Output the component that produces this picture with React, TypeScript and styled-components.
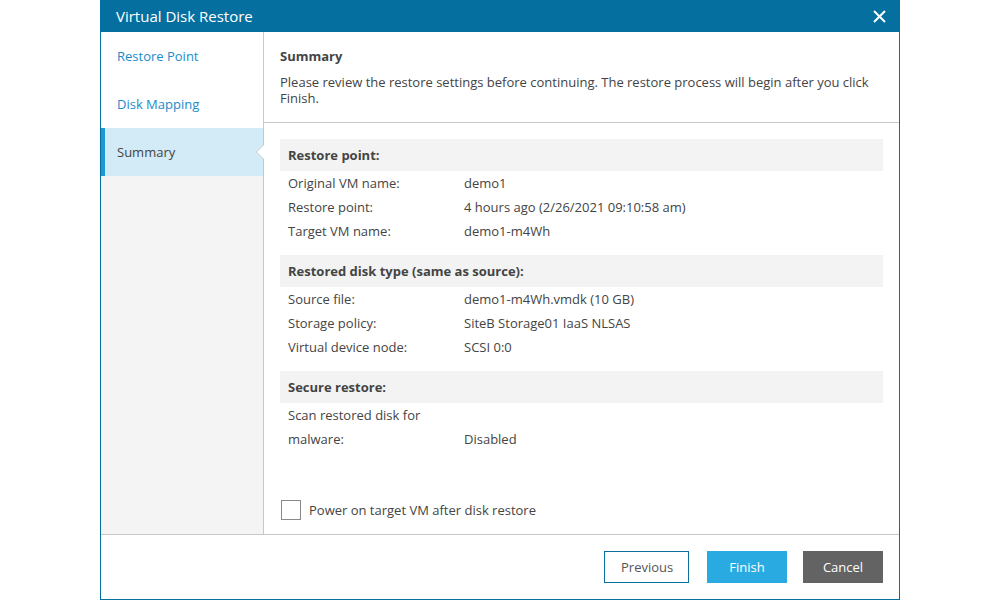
import styled, { createGlobalStyle } from "styled-components";

const GlobalStyle = createGlobalStyle`
  html, body {
    margin: 0;
    padding: 0;
    background: #ffffff;
  }
  body {
    font-family: "Open Sans", "Liberation Sans", sans-serif;
    font-size: 13px;
    color: #444444;
  }
  * {
    box-sizing: border-box;
  }
`;

const Page = styled.div`
  width: 1000px;
  height: 600px;
  display: flex;
  justify-content: center;
`;

const Dialog = styled.div`
  width: 800px;
  height: 600px;
  border: 1px solid #05709f;
  border-top: none;
  display: flex;
  flex-direction: column;
  background: #fff;
`;

const Header = styled.div`
  height: 32px;
  margin: 0 -1px;
  background: #05709f;
  display: flex;
  align-items: center;
  justify-content: space-between;
  padding: 0 14px 0 16px;
`;

const Title = styled.h1`
  margin: 0;
  font-size: 15px;
  font-weight: 400;
  color: #fff;
`;

const CloseButton = styled.button`
  border: none;
  background: transparent;
  padding: 0;
  display: flex;
  cursor: pointer;
`;

const Body = styled.div`
  flex: 1;
  display: flex;
  min-height: 0;
`;

const Sidebar = styled.nav`
  width: 163px;
  background: #f4f4f4;
  border-right: 1px solid #c8c8c8;
  display: flex;
  flex-direction: column;
`;

const StepItem = styled.div<{ $active?: boolean }>`
  position: relative;
  height: 48px;
  display: flex;
  align-items: center;
  padding-left: ${(p) => (p.$active ? "12px" : "16px")};
  border-left: ${(p) => (p.$active ? "4px solid #1d9ad6" : "none")};
  background: ${(p) => (p.$active ? "#d3eaf7" : "#fff")};
  color: ${(p) => (p.$active ? "#444" : "#1a8ccb")};
  cursor: pointer;

  ${(p) =>
    p.$active &&
    `
    &::before, &::after {
      content: "";
      position: absolute;
      top: 50%;
      width: 0;
      height: 0;
      border-style: solid;
      border-color: transparent;
    }
    &::before {
      right: -1px;
      margin-top: -8px;
      border-width: 8px 8px 8px 0;
      border-right-color: #c8c8c8;
    }
    &::after {
      right: -1px;
      margin-top: -7px;
      border-width: 7px 7px 7px 0;
      border-right-color: #fff;
    }
  `}
`;

const Main = styled.section`
  flex: 1;
  display: flex;
  flex-direction: column;
  min-width: 0;
`;

const MainHeader = styled.div`
  padding: 16px 16px 16px 16px;
  border-bottom: 1px solid #c8c8c8;
`;

const MainTitle = styled.div`
  font-weight: 700;
  line-height: 16px;
  margin-bottom: 10px;
`;

const Description = styled.p`
  margin: 0;
  line-height: 16px;
`;

const Content = styled.div`
  flex: 1;
  padding: 16px 16px 14px 16px;
  display: flex;
  flex-direction: column;
`;

const Group = styled.div`
  margin-bottom: 12px;
`;

const GroupHeader = styled.div`
  height: 32px;
  background: #f3f3f3;
  display: flex;
  align-items: center;
  padding-left: 8px;
  font-weight: 700;
`;

const Row = styled.div`
  display: grid;
  grid-template-columns: 176px 1fr;
  align-items: end;
  padding-left: 8px;
  line-height: 24px;
`;

const Label = styled.div`
  padding-right: 24px;
`;

const Value = styled.div``;

const CheckRow = styled.label`
  margin-top: auto;
  display: flex;
  align-items: center;
  gap: 8px;
  cursor: pointer;
`;

const CheckBox = styled.span`
  width: 20px;
  height: 20px;
  border: 1px solid #8a8a8a;
  background: #fff;
  margin-left: 1px;
`;

const Footer = styled.div`
  height: 65px;
  border-top: 1px solid #c8c8c8;
  display: flex;
  justify-content: flex-end;
  align-items: flex-start;
  padding: 16px 16px 0 0;
  gap: 16px;
`;

const Button = styled.button<{ $variant: "outline" | "primary" | "dark" }>`
  height: 32px;
  min-width: 80px;
  padding: 0 16px;
  font-family: "Open Sans", "Liberation Sans", sans-serif;
  font-size: 13px;
  cursor: pointer;
  border: ${(p) => (p.$variant === "outline" ? "1px solid #0b6e9e" : "none")};
  background: ${(p) =>
    p.$variant === "primary" ? "#29abe2" : p.$variant === "dark" ? "#636363" : "#fff"};
  color: ${(p) => (p.$variant === "outline" ? "#555" : "#fff")};
  margin-right: ${(p) => (p.$variant === "outline" ? "2px" : "0")};
  width: ${(p) => (p.$variant === "outline" ? "85px" : "80px")};
`;

type Item = { label: string; value: string };

const groups: { title: string; rows: Item[] }[] = [
  {
    title: "Restore point:",
    rows: [
      { label: "Original VM name:", value: "demo1" },
      { label: "Restore point:", value: "4 hours ago (2/26/2021 09:10:58 am)" },
      { label: "Target VM name:", value: "demo1-m4Wh" },
    ],
  },
  {
    title: "Restored disk type (same as source):",
    rows: [
      { label: "Source file:", value: "demo1-m4Wh.vmdk (10 GB)" },
      { label: "Storage policy:", value: "SiteB Storage01 IaaS NLSAS" },
      { label: "Virtual device node:", value: "SCSI 0:0" },
    ],
  },
  {
    title: "Secure restore:",
    rows: [{ label: "Scan restored disk for malware:", value: "Disabled" }],
  },
];

const steps = ["Restore Point", "Disk Mapping", "Summary"];

export default function App() {
  return (
    <>
      <GlobalStyle />
      <Page>
        <Dialog>
          <Header>
            <Title>Virtual Disk Restore</Title>
            <CloseButton aria-label="Close">
              <svg width="13" height="13" viewBox="0 0 13 13">
                <path d="M1 1 L12 12 M12 1 L1 12" stroke="#fff" strokeWidth="2" />
              </svg>
            </CloseButton>
          </Header>
          <Body>
            <Sidebar>
              {steps.map((s) => (
                <StepItem key={s} $active={s === "Summary"}>
                  {s}
                </StepItem>
              ))}
            </Sidebar>
            <Main>
              <MainHeader>
                <MainTitle>Summary</MainTitle>
                <Description>
                  Please review the restore settings before continuing. The restore process will
                  begin after you click Finish.
                </Description>
              </MainHeader>
              <Content>
                {groups.map((g) => (
                  <Group key={g.title}>
                    <GroupHeader>{g.title}</GroupHeader>
                    {g.rows.map((r) => (
                      <Row key={r.label}>
                        <Label>{r.label}</Label>
                        <Value>{r.value}</Value>
                      </Row>
                    ))}
                  </Group>
                ))}
                <CheckRow>
                  <CheckBox />
                  Power on target VM after disk restore
                </CheckRow>
              </Content>
            </Main>
          </Body>
          <Footer>
            <Button $variant="outline">Previous</Button>
            <Button $variant="primary">Finish</Button>
            <Button $variant="dark">Cancel</Button>
          </Footer>
        </Dialog>
      </Page>
    </>
  );
}
